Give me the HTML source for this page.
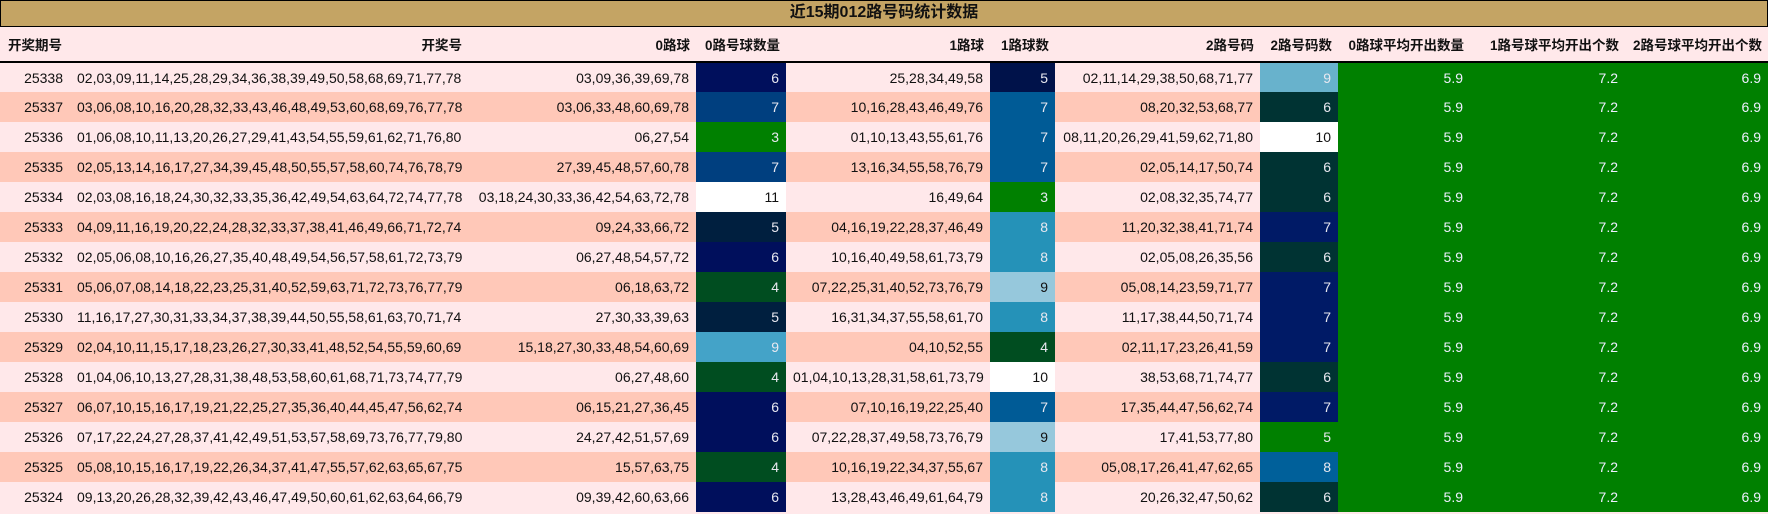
<!DOCTYPE html>
<html><head><meta charset="utf-8"><style>
*{margin:0;padding:0;box-sizing:border-box}
body{width:1768px;height:514px;overflow:hidden;background:#ffe8ea;font-family:"Liberation Sans","Noto Sans CJK SC",sans-serif;font-size:14px;color:#111}
.title{height:27px;background:#c4a464;border:1.5px solid #000;text-align:center;font-weight:bold;font-size:16px;line-height:24px;font-family:"Liberation Sans","Noto Sans CJK SC",sans-serif}
table{border-collapse:collapse;table-layout:fixed;width:1768px}
th{height:35px;border-bottom:2px solid #000;background:#ffe8ea;font-weight:bold;font-size:13.5px;text-align:right;padding:0 6px;white-space:nowrap}
th:first-child{text-align:left;padding-left:8px}
td{height:30px;text-align:right;padding:0 7px;white-space:nowrap}
tr.a td{background:#ffe8ea}
tr.b td{background:#ffc8b8}
td.g{background:#008000!important;color:#eef}
.w{color:#e8e8f0}
</style></head><body>
<div class="title">近15期012路号码统计数据</div>
<table>
<colgroup><col style="width:70px"><col style="width:398px"><col style="width:228px"><col style="width:90px"><col style="width:204px"><col style="width:65px"><col style="width:205px"><col style="width:78px"><col style="width:132px"><col style="width:155px"><col style="width:143px"></colgroup>
<tr><th>开奖期号</th><th>开奖号</th><th>0路球</th><th>0路号球数量</th><th>1路球</th><th>1路球数</th><th>2路号码</th><th>2路号码数</th><th>0路球平均开出数量</th><th>1路号球平均开出个数</th><th>2路号球平均开出个数</th></tr>
<tr class="a"><td>25338</td><td>02,03,09,11,14,25,28,29,34,36,38,39,49,50,58,68,69,71,77,78</td><td>03,09,36,39,69,78</td><td class="w" style="background:#000f5c">6</td><td>25,28,34,49,58</td><td class="w" style="background:#00124a">5</td><td>02,11,14,29,38,50,68,71,77</td><td class="w" style="background:#68b2cc">9</td><td class="g">5.9</td><td class="g">7.2</td><td class="g">6.9</td></tr>
<tr class="b"><td>25337</td><td>03,06,08,10,16,20,28,32,33,43,46,48,49,53,60,68,69,76,77,78</td><td>03,06,33,48,60,69,78</td><td class="w" style="background:#003f7f">7</td><td>10,16,28,43,46,49,76</td><td class="w" style="background:#005b96">7</td><td>08,20,32,53,68,77</td><td class="w" style="background:#003333">6</td><td class="g">5.9</td><td class="g">7.2</td><td class="g">6.9</td></tr>
<tr class="a"><td>25336</td><td>01,06,08,10,11,13,20,26,27,29,41,43,54,55,59,61,62,71,76,80</td><td>06,27,54</td><td class="w" style="background:#008000">3</td><td>01,10,13,43,55,61,76</td><td class="w" style="background:#005b96">7</td><td>08,11,20,26,29,41,59,62,71,80</td><td style="background:#fff">10</td><td class="g">5.9</td><td class="g">7.2</td><td class="g">6.9</td></tr>
<tr class="b"><td>25335</td><td>02,05,13,14,16,17,27,34,39,45,48,50,55,57,58,60,74,76,78,79</td><td>27,39,45,48,57,60,78</td><td class="w" style="background:#003f7f">7</td><td>13,16,34,55,58,76,79</td><td class="w" style="background:#005b96">7</td><td>02,05,14,17,50,74</td><td class="w" style="background:#003333">6</td><td class="g">5.9</td><td class="g">7.2</td><td class="g">6.9</td></tr>
<tr class="a"><td>25334</td><td>02,03,08,16,18,24,30,32,33,35,36,42,49,54,63,64,72,74,77,78</td><td>03,18,24,30,33,36,42,54,63,72,78</td><td style="background:#fff">11</td><td>16,49,64</td><td class="w" style="background:#008000">3</td><td>02,08,32,35,74,77</td><td class="w" style="background:#003333">6</td><td class="g">5.9</td><td class="g">7.2</td><td class="g">6.9</td></tr>
<tr class="b"><td>25333</td><td>04,09,11,16,19,20,22,24,28,32,33,37,38,41,46,49,66,71,72,74</td><td>09,24,33,66,72</td><td class="w" style="background:#001f3f">5</td><td>04,16,19,22,28,37,46,49</td><td class="w" style="background:#2592b8">8</td><td>11,20,32,38,41,71,74</td><td class="w" style="background:#001a66">7</td><td class="g">5.9</td><td class="g">7.2</td><td class="g">6.9</td></tr>
<tr class="a"><td>25332</td><td>02,05,06,08,10,16,26,27,35,40,48,49,54,56,57,58,61,72,73,79</td><td>06,27,48,54,57,72</td><td class="w" style="background:#000f5c">6</td><td>10,16,40,49,58,61,73,79</td><td class="w" style="background:#2592b8">8</td><td>02,05,08,26,35,56</td><td class="w" style="background:#003333">6</td><td class="g">5.9</td><td class="g">7.2</td><td class="g">6.9</td></tr>
<tr class="b"><td>25331</td><td>05,06,07,08,14,18,22,23,25,31,40,52,59,63,71,72,73,76,77,79</td><td>06,18,63,72</td><td class="w" style="background:#004d20">4</td><td>07,22,25,31,40,52,73,76,79</td><td style="background:#96c8dc">9</td><td>05,08,14,23,59,71,77</td><td class="w" style="background:#001a66">7</td><td class="g">5.9</td><td class="g">7.2</td><td class="g">6.9</td></tr>
<tr class="a"><td>25330</td><td>11,16,17,27,30,31,33,34,37,38,39,44,50,55,58,61,63,70,71,74</td><td>27,30,33,39,63</td><td class="w" style="background:#001f3f">5</td><td>16,31,34,37,55,58,61,70</td><td class="w" style="background:#2592b8">8</td><td>11,17,38,44,50,71,74</td><td class="w" style="background:#001a66">7</td><td class="g">5.9</td><td class="g">7.2</td><td class="g">6.9</td></tr>
<tr class="b"><td>25329</td><td>02,04,10,11,15,17,18,23,26,27,30,33,41,48,52,54,55,59,60,69</td><td>15,18,27,30,33,48,54,60,69</td><td class="w" style="background:#44a3c8">9</td><td>04,10,52,55</td><td class="w" style="background:#004d20">4</td><td>02,11,17,23,26,41,59</td><td class="w" style="background:#001a66">7</td><td class="g">5.9</td><td class="g">7.2</td><td class="g">6.9</td></tr>
<tr class="a"><td>25328</td><td>01,04,06,10,13,27,28,31,38,48,53,58,60,61,68,71,73,74,77,79</td><td>06,27,48,60</td><td class="w" style="background:#004d20">4</td><td>01,04,10,13,28,31,58,61,73,79</td><td style="background:#fff">10</td><td>38,53,68,71,74,77</td><td class="w" style="background:#003333">6</td><td class="g">5.9</td><td class="g">7.2</td><td class="g">6.9</td></tr>
<tr class="b"><td>25327</td><td>06,07,10,15,16,17,19,21,22,25,27,35,36,40,44,45,47,56,62,74</td><td>06,15,21,27,36,45</td><td class="w" style="background:#000f5c">6</td><td>07,10,16,19,22,25,40</td><td class="w" style="background:#005b96">7</td><td>17,35,44,47,56,62,74</td><td class="w" style="background:#001a66">7</td><td class="g">5.9</td><td class="g">7.2</td><td class="g">6.9</td></tr>
<tr class="a"><td>25326</td><td>07,17,22,24,27,28,37,41,42,49,51,53,57,58,69,73,76,77,79,80</td><td>24,27,42,51,57,69</td><td class="w" style="background:#000f5c">6</td><td>07,22,28,37,49,58,73,76,79</td><td style="background:#96c8dc">9</td><td>17,41,53,77,80</td><td class="w" style="background:#008000">5</td><td class="g">5.9</td><td class="g">7.2</td><td class="g">6.9</td></tr>
<tr class="b"><td>25325</td><td>05,08,10,15,16,17,19,22,26,34,37,41,47,55,57,62,63,65,67,75</td><td>15,57,63,75</td><td class="w" style="background:#004d20">4</td><td>10,16,19,22,34,37,55,67</td><td class="w" style="background:#2592b8">8</td><td>05,08,17,26,41,47,62,65</td><td class="w" style="background:#00609a">8</td><td class="g">5.9</td><td class="g">7.2</td><td class="g">6.9</td></tr>
<tr class="a"><td>25324</td><td>09,13,20,26,28,32,39,42,43,46,47,49,50,60,61,62,63,64,66,79</td><td>09,39,42,60,63,66</td><td class="w" style="background:#000f5c">6</td><td>13,28,43,46,49,61,64,79</td><td class="w" style="background:#2592b8">8</td><td>20,26,32,47,50,62</td><td class="w" style="background:#003333">6</td><td class="g">5.9</td><td class="g">7.2</td><td class="g">6.9</td></tr>
</table>
</body></html>
